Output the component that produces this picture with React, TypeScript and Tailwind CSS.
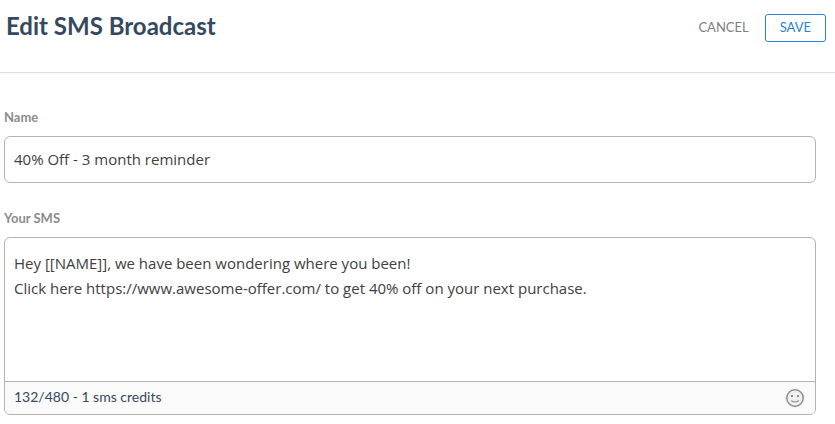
import { useState } from "react";

const SmileIcon = () => {
  return (
    <svg width="20" height="20" viewBox="0 0 20 20" fill="none" aria-hidden="true">
      <circle cx="10" cy="10" r="10" fill="#f0f0f0" />
      <circle cx="10" cy="10" r="8.2" stroke="#909090" strokeWidth="1.5" />
      <circle cx="7" cy="8" r="1.1" fill="#777777" />
      <circle cx="13" cy="8" r="1.1" fill="#777777" />
      <path d="M6.500 12.800c1 .8 2.200 1.200 3.500 1.200s2.500-.4 3.500-1.200" stroke="#909090" strokeWidth="1.200" strokeLinecap="round" />
    </svg>
  );
};

const Header = () => {
  return (
    <header className="flex items-start justify-between border-b border-[#e8d2f5] pt-2 pr-[9px] pb-7 pl-1.5">
      <h1 className="text-2xl leading-9 font-bold text-[#34495e]">Edit SMS Broadcast</h1>
      <div className="flex items-center pt-1.5 text-[13px] leading-5">
        <button type="button" className="px-4 pb-0.5 text-[#808080]">CANCEL</button>
        <button type="button" className="h-7 rounded-[3px] border border-[#2980dc] px-3.5 pb-0.5 text-[#2980dc]">
          SAVE
        </button>
      </div>
    </header>
  );
};

const App = () => {
  const [name, setName] = useState("40% Off - 3 month reminder");
  const [message, setMessage] = useState(
    "Hey [[NAME]], we have been wondering where you been!\nClick here https://www.awesome-offer.com/ to get 40% off on your next purchase."
  );

  return (
    <div className="w-full bg-white font-['Lato',sans-serif]">
      <Header />
      <form className="flex flex-col pt-[34px] pr-[19px] pl-1">
        <label htmlFor="name" className="text-[13px] leading-5 font-bold text-[#8c8c8c]">Name</label>
        <input
          id="name"
          type="text"
          value={name}
          onChange={(e) => setName(e.target.value)}
          className="mt-[9px] h-[47px] w-full rounded-md border border-[#b3b3b3] px-[9px] pb-0.5 font-['Open_Sans',sans-serif] text-[15px] text-[#404040] outline-none"
        />
        <label htmlFor="sms" className="mt-[25px] text-[13px] leading-5 font-bold text-[#8c8c8c]">Your SMS</label>
        <div className="mt-[9px] overflow-hidden rounded-md border border-[#b3b3b3]">
          <textarea
            id="sms"
            value={message}
            onChange={(e) => setMessage(e.target.value)}
            className="block h-[143px] w-full resize-none px-[9px] pt-[13px] font-['Open_Sans',sans-serif] text-[15px] leading-[25px] text-[#404040] outline-none"
          />
          <div className="flex h-[33px] items-center justify-between border-t border-[#b3b3b3] bg-[#fafafa] pr-2.5 pl-[9px]">
            <span className="pb-0.5 text-[14px] leading-5 text-[#34495e]">132/480 - 1 sms credits</span>
            <button type="button" aria-label="Insert emoji">
              <SmileIcon />
            </button>
          </div>
        </div>
      </form>
    </div>
  );
};

export default App;
